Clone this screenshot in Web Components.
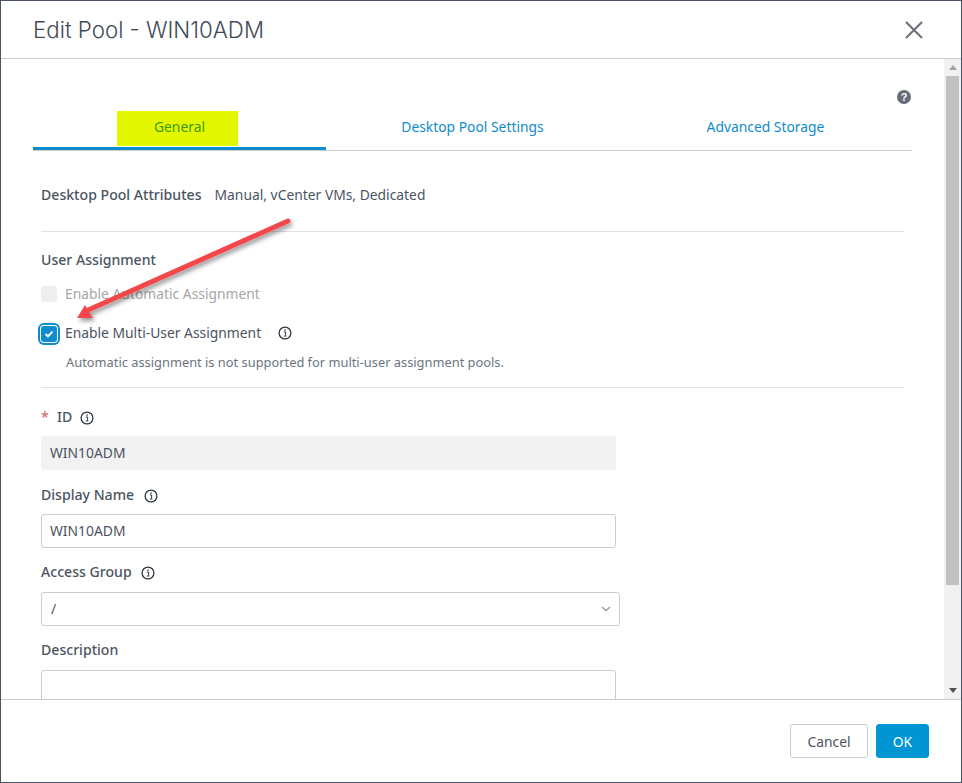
<!DOCTYPE html>
<html>
<head>
<meta charset="utf-8">
<title>Edit Pool</title>
<style>
    html, body { margin: 0; padding: 0; background: #ffffff; }
    body { font-family: "Noto Sans", "Open Sans", sans-serif; font-size: 13.85px; color: #4b5462; }
    [hidden] { display: none; }
</style>
</head>
<body>
<edit-pool-dialog heading="Edit Pool - WIN10ADM">
    <pool-tabs></pool-tabs>
    <pool-form></pool-form>
</edit-pool-dialog>

<script>
class InfoIcon extends HTMLElement {
    constructor() {
        super()
        this.attachShadow({ mode: 'open' })
        this.shadowRoot.innerHTML = `
            <style>
                :host { display: inline-flex; width: 14px; height: 14px; }
                svg { display: block; }
            </style>
            <svg width="14" height="14" viewBox="0 0 14 14" fill="none">
                <circle cx="7" cy="7" r="5.9" stroke="#2f3743" stroke-width="1.3"/>
                <rect x="6.4" y="3.4" width="1.3" height="1.4" fill="#2f3743"/>
                <path d="M5.8 6h1.8v3.6M5.8 10h2.6" stroke="#2f3743" stroke-width="1"/>
            </svg>
        `
    }
}
customElements.define('info-icon', InfoIcon)

class PoolScrollbar extends HTMLElement {
    constructor() {
        super()
        this.attachShadow({ mode: 'open' })
        this.shadowRoot.innerHTML = `
            <style>
                :host {
                    display: flex;
                    flex-direction: column;
                    flex: none;
                    width: 17px;
                    background: #f1f1f1;
                }
                .btn { height: 17px; display: flex; align-items: center; justify-content: center; flex: none; }
                .thumb { height: 509px; margin: 0 2px; background: #c1c1c1; flex: none; }
                .rest { flex: 1; }
            </style>
            <div class="btn">
                <svg width="8" height="5" viewBox="0 0 8 5"><path d="M4 0l4 5H0z" fill="#a3a3a3"/></svg>
            </div>
            <div class="thumb"></div>
            <div class="rest"></div>
            <div class="btn">
                <svg width="8" height="5" viewBox="0 0 8 5"><path d="M0 0h8L4 5z" fill="#505050"/></svg>
            </div>
        `
    }
}
customElements.define('pool-scrollbar', PoolScrollbar)

class EditPoolDialog extends HTMLElement {
    constructor() {
        super()
        this.attachShadow({ mode: 'open' })
        this.shadowRoot.innerHTML = `
            <style>
                :host {
                    display: flex;
                    flex-direction: column;
                    box-sizing: border-box;
                    width: 962px;
                    height: 783px;
                    border: 1px solid #4a5464;
                    background: #ffffff;
                    position: relative;
                    overflow: hidden;
                }
                header {
                    flex: none;
                    height: 57px;
                    border-bottom: 1px solid #cccccc;
                    display: flex;
                    align-items: center;
                    justify-content: space-between;
                    padding: 0 38px 0 32px;
                }
                h1 {
                    margin: 0;
                    font: 300 22.3px Inter, sans-serif;
                    color: #3f4a59;
                }
                .body { flex: none; height: 640px; display: flex; }
                .pane {
                    flex: 1;
                    min-width: 0;
                    overflow: hidden;
                    padding: 31px 32px 0 32px;
                }
                .help-row { display: flex; justify-content: flex-end; height: 21px; }
                .help {
                    width: 14px;
                    height: 14px;
                    border-radius: 50%;
                    background: #666c78;
                    color: #ffffff;
                    font: 700 11px/14px "Liberation Sans", sans-serif;
                    text-align: center;
                    margin-right: 1px;
                }
                footer {
                    flex: none;
                    flex-grow: 1;
                    border-top: 1px solid #cccccc;
                    display: flex;
                    justify-content: flex-end;
                    gap: 8px;
                    padding: 24px 32px 0 0;
                }
                button {
                    box-sizing: border-box;
                    height: 34px;
                    border-radius: 3px;
                    font: 13.85px "Noto Sans", sans-serif;
                    padding: 0;
                }
                .cancel { width: 78px; background: #ffffff; border: 1px solid #cccccc; color: #4b5462; }
                .ok { width: 53px; background: #0095d3; border: 1px solid #0095d3; color: #ffffff; }
                .arrow { position: absolute; left: 0; top: 0; pointer-events: none; }
            </style>
            <header>
                <h1>${this.getAttribute('heading')}</h1>
                <svg width="18" height="18" viewBox="0 0 18 18" fill="none">
                    <path d="M1 1l16 16M17 1L1 17" stroke="#6a7079" stroke-width="2"/>
                </svg>
            </header>
            <div class="body">
                <div class="pane">
                    <div class="help-row"><div class="help">?</div></div>
                    <slot></slot>
                </div>
                <pool-scrollbar></pool-scrollbar>
            </div>
            <footer>
                <button class="cancel">Cancel</button>
                <button class="ok">OK</button>
            </footer>
            <svg class="arrow" width="960" height="781" viewBox="1 1 960 781">
                <defs>
                    <filter id="sh" x="-10%" y="-20%" width="120%" height="140%">
                        <feDropShadow dx="2" dy="3" stdDeviation="2" flood-color="#000000" flood-opacity="0.4"/>
                    </filter>
                </defs>
                <g filter="url(#sh)" fill="#f3474b">
                    <path d="M288 221L86 311" stroke="#f3474b" stroke-width="5" stroke-linecap="round"/>
                    <path d="M77 318L85 305L93 318z"/>
                </g>
            </svg>
        `
    }
}
customElements.define('edit-pool-dialog', EditPoolDialog)

class PoolTabs extends HTMLElement {
    constructor() {
        super()
        this.attachShadow({ mode: 'open' })
        this.shadowRoot.innerHTML = `
            <style>
                :host {
                    display: grid;
                    grid-template-columns: 293px 293px 293px;
                    border-bottom: 1px solid #cccccc;
                    font: 13.85px "Noto Sans", sans-serif;
                    color: #0f8ccb;
                }
                .tab {
                    display: flex;
                    justify-content: center;
                    align-items: center;
                    padding-bottom: 9px;
                    height: 30px;
                }
                .active { border-bottom: 3px solid #0f8ccb; padding-bottom: 1px; height: 35px; }
                .mark {
                    box-sizing: border-box;
                    width: 121px;
                    height: 35px;
                    padding: 0 0 5px 5px;
                    margin-right: 5px;
                    background: #e3f800;
                    color: #3f9a07;
                    display: flex;
                    align-items: center;
                    justify-content: center;
                }
            </style>
            <div class="tab active"><span class="mark">General</span></div>
            <div class="tab">Desktop Pool Settings</div>
            <div class="tab">Advanced Storage</div>
        `
    }
}
customElements.define('pool-tabs', PoolTabs)

class CheckRow extends HTMLElement {
    constructor() {
        super()
        this.attachShadow({ mode: 'open' })
        this.shadowRoot.innerHTML = `
            <style>
                :host { display: flex; align-items: center; height: 20px; gap: 8px; }
                .box {
                    width: 16px;
                    height: 16px;
                    border-radius: 2px;
                    background: #eeeeee;
                    flex: none;
                    display: flex;
                    align-items: center;
                    justify-content: center;
                }
                :host([checked]) .box {
                    background: #0f8ccb;
                    box-shadow: 0 0 0 1px #ffffff, 0 0 0 3px #0f8ccb;
                    border-radius: 3px;
                    transform: translateY(1px);
                }
                :host([disabled]) { color: #a6a6a6; }
                svg { display: none; }
                :host([checked]) svg { display: block; }
            </style>
            <span class="box">
                <svg width="10" height="8" viewBox="0 0 10 8" fill="none">
                    <path d="M1.5 4l2.4 2.4L8.5 1.6" stroke="#ffffff" stroke-width="2"/>
                </svg>
            </span>
            <slot></slot>
        `
    }
}
customElements.define('check-row', CheckRow)

class FormField extends HTMLElement {
    constructor() {
        super()
        this.attachShadow({ mode: 'open' })
        this.shadowRoot.innerHTML = `
            <style>
                :host { display: block; font-size: 13.85px; }
                .label {
                    display: flex;
                    align-items: center;
                    height: 20px;
                    font-size: 14.1px;
                    font-weight: 500;
                    color: #4b5462;
                    margin-bottom: 9px;
                }
                :host([select]) .label, :host([tall]) .label { margin-bottom: 10px; }
                .star { color: #d9686c; width: 16px; flex: none; }
                info-icon { margin-left: 10px; transform: translateY(1px); }
                :host([required]) info-icon { margin-left: 8px; }
                :host([select]) info-icon { margin-left: 9px; }
                .control {
                    box-sizing: border-box;
                    width: 575px;
                    height: 34px;
                    border: 1px solid #cccccc;
                    border-radius: 3px;
                    padding: 0 8px;
                    display: flex;
                    align-items: center;
                    justify-content: space-between;
                }
                :host([readonly]) .control { background: #f2f2f3; border-color: #f2f2f3; }
                :host([select]) .control { width: 579px; }
                :host([select]) .control span { padding-left: 1px; }
                :host([tall]) .control { height: 60px; }
            </style>
            <div class="label">
                ${this.hasAttribute('required') ? '<span class="star">*</span>' : ''}
                <span>${this.getAttribute('label')}</span>
                ${this.hasAttribute('info') ? '<info-icon></info-icon>' : ''}
            </div>
            <div class="control">
                <span>${this.getAttribute('value') || ''}</span>
                ${this.hasAttribute('select') ? `
                <svg width="10" height="6" viewBox="0 0 10 6" fill="none">
                    <path d="M1 1l4 3.6L9 1" stroke="#9a9a9a" stroke-width="1.3"/>
                </svg>` : ''}
            </div>
        `
    }
}
customElements.define('form-field', FormField)

class PoolForm extends HTMLElement {
    constructor() {
        super()
        this.attachShadow({ mode: 'open' })
        this.shadowRoot.innerHTML = `
            <style>
                :host {
                    display: block;
                    padding: 0 8px;
                    font-size: 13.85px;
                    line-height: 20px;
                    color: #4b5462;
                }
                .attrs { display: flex; gap: 13px; margin-top: 34px; }
                .strong { font-weight: 500; font-size: 14.1px; }
                hr { border: 0; border-top: 1px solid #e2e2e2; margin: 0; }
                .hint { font-size: 12.85px; color: #6c7480; padding-left: 25px; margin-top: 9px; }
            </style>
            <div class="attrs">
                <span class="strong">Desktop Pool Attributes</span>
                <span>Manual, vCenter VMs, Dedicated</span>
            </div>
            <hr style="margin-top: 26px">
            <div class="strong" style="margin-top: 18px">User Assignment</div>
            <check-row disabled style="margin-top: 14px">Enable Automatic Assignment</check-row>
            <check-row checked style="margin-top: 19px">
                <span>Enable Multi-User Assignment</span>
                <info-icon style="margin-left: 9px"></info-icon>
            </check-row>
            <div class="hint">Automatic assignment is not supported for multi-user assignment pools.</div>
            <hr style="margin-top: 15px">
            <form-field required info readonly label="ID" value="WIN10ADM" style="margin-top: 19px"></form-field>
            <form-field info label="Display Name" value="WIN10ADM" style="margin-top: 15px"></form-field>
            <form-field info select label="Access Group" value="/" style="margin-top: 14px"></form-field>
            <form-field tall label="Description" style="margin-top: 14px"></form-field>
        `
    }
}
customElements.define('pool-form', PoolForm)
</script>
</body>
</html>
